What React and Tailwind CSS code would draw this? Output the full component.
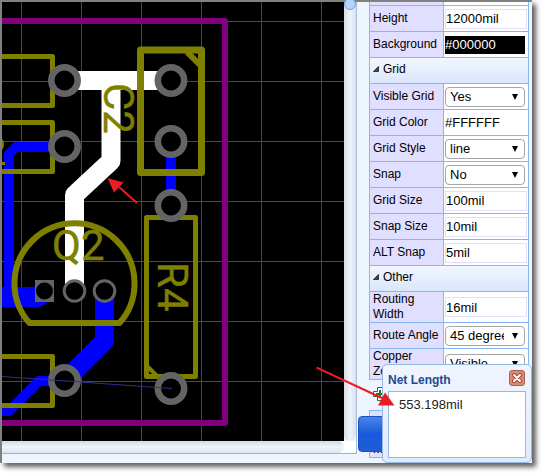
const pads = [
  [64.5, 80.5],
  [64.5, 146.5],
  [171, 80.5],
  [171, 141.5],
  [171, 205.5],
  [171, 388.5],
  [64.5, 380.5],
];
const gridX = [21.5, 81.5, 141.5, 201.5, 261.5, 321.5];
const gridY = [21.5, 81.5, 141.5, 201.5, 261.5, 321.5, 381.5];

function Board() {
  return (
    <svg
      className="block h-full w-full bg-black"
      viewBox="2 2 342 439"
      preserveAspectRatio="xMinYMin slice"
      role="img"
      aria-label="PCB layout"
    >
      <g stroke="#484848" strokeWidth="1">
        {gridX.map((x) => (
          <path key={x} d={`M${x} 0V900`} />
        ))}
        {gridY.map((y) => (
          <path key={y} d={`M0 ${y}H900`} />
        ))}
      </g>
      <g fill="none" stroke="#0000ff" strokeLinejoin="round">
        <path strokeWidth="10" d="M64 147H16L9 154V296" />
        <path strokeWidth="20" d="M0 297H38L44 291" />
        <path strokeWidth="10" d="M171 141V205" />
        <path strokeWidth="19" d="M104.5 291V341L64.5 381" />
        <path strokeWidth="10" d="M64 381H39L9 411H0" />
      </g>
      <g fill="none" stroke="#ffffff" strokeWidth="19" strokeLinejoin="round">
        <path d="M64 80.5H171" />
        <path d="M111 81V161L74.5 195V291" />
      </g>
      <path
        d="M0 21H225V423H0"
        fill="none"
        stroke="#800080"
        strokeWidth="6"
        strokeLinejoin="round"
      />
      <g fill="none" stroke="#808000" strokeWidth="5" strokeLinejoin="round">
        <path d="M0 56.5H52.5V105.5H0" />
        <path d="M0 122.5H52.5V171.5H0" />
        <path d="M0 356.5H52.5V405.5H0" />
        <path d="M146.5 217.5H195.5V376.5H146.5Z" />
        <path strokeWidth="4" d="M147 366L158 377" />
        <path strokeWidth="7" d="M140.5 50H201.5V172.5H140.5Z" />
        <path strokeWidth="6" d="M187 52L200 65" />
        <path strokeWidth="6" d="M29.5 323A60 60 0 1 1 119.5 323Z" />
        <path strokeWidth="3" d="M1 140Q4 144 1 149M2 163.5H5" />
      </g>
      <g
        fill="#808000"
        stroke="#808000"
        strokeWidth="0.4"
        fontFamily="Roboto, sans-serif"
        fontSize="42"
      >
        <text transform="translate(104 83) rotate(90)">C2</text>
        <text x="52" y="260">Q2</text>
        <text transform="translate(158 262) rotate(90)">R4</text>
      </g>
      <g fill="#000000" stroke="#646464" strokeWidth="6.5">
        {pads.map(([x, y]) => (
          <circle key={`${x}-${y}`} cx={x} cy={y} r="13.2" />
        ))}
      </g>
      <path d="M35 280H54V302H35Z" fill="#646464" />
      <circle cx="44.5" cy="291" r="8.5" fill="#000000" />
      <g fill="#000000" stroke="#646464" strokeWidth="3">
        <circle cx="74.5" cy="291" r="10.3" />
        <circle cx="104.5" cy="291" r="10.3" />
      </g>
      <path d="M2 376.5L172 388.5" stroke="#303088" strokeWidth="1" />
      <path d="M119 187L137 203" stroke="#ed1c24" strokeWidth="2" />
      <path d="M107.5 178L123.5 182.5L114 192.5Z" fill="#ed1c24" />
    </svg>
  );
}

const labelCell =
  "w-[74px] border-r border-b border-[#84b8f4] bg-[#e0dfff] py-0 pr-0 pl-[3px] text-left text-xs leading-[15px] font-normal";
const valueCell = "border-r border-b border-[#84b8f4] bg-white p-0 pl-px";

function Field({ id, label, value, type = "text" }) {
  let control;
  if (type === "select") {
    control = (
      <div className="relative w-20">
        <select
          id={id}
          defaultValue={value}
          className="block h-5 w-full appearance-none rounded-sm border border-[#a6a6a6] bg-white pr-5 pl-1 text-[13px] leading-4"
        >
          <option>{value}</option>
        </select>
        <svg
          className="pointer-events-none absolute top-[7px] right-[7px] h-[6px] w-[6px]"
          viewBox="0 0 6 6"
          aria-hidden="true"
        >
          <path d="M0 0H6L3 6Z" />
        </svg>
      </div>
    );
  } else if (type === "color") {
    control = (
      <input
        id={id}
        defaultValue={value}
        className={
          value === "#000000"
            ? "block h-[18px] w-20 bg-black text-[13px] text-white"
            : "block h-[18px] w-20 bg-white text-[13px] text-black"
        }
      />
    );
  } else {
    control = (
      <input
        id={id}
        defaultValue={value}
        className="block h-5 w-[82px] border border-[#e0dfff] bg-white text-[13px]"
      />
    );
  }
  return (
    <tr className="h-[26px]">
      <th scope="row" className={labelCell}>
        <label htmlFor={id}>{label}</label>
      </th>
      <td className={valueCell}>{control}</td>
    </tr>
  );
}

function Group({ title }) {
  return (
    <tr className="h-[26px]">
      <th
        colSpan={2}
        className="border-r border-b border-[#84b8f4] bg-linear-to-b from-[#f2f7ff] to-[#d9e6fb] p-0 pb-1 pl-[3px] text-left text-xs font-normal"
      >
        <span className="flex items-center gap-1">
          <svg className="h-[6px] w-[6px]" viewBox="0 0 7 7" aria-hidden="true">
            <path d="M6.5 0.5V6.5H0.5Z" fill="#444" stroke="#222" />
          </svg>
          {title}
        </span>
      </th>
    </tr>
  );
}

function Properties() {
  return (
    <aside className="relative w-[175px] shrink-0 overflow-hidden bg-[#eff5fe] pr-[3px] pl-3">
      <table className="w-full table-fixed border-separate border-spacing-0 border-l border-[#84b8f4]">
        <tbody>
          <tr className="h-1">
            <th className={labelCell}></th>
            <td className={valueCell}></td>
          </tr>
          <Field id="height" label="Height" value="12000mil" />
          <Field id="background" label="Background" value="#000000" type="color" />
          <Group title="Grid" />
          <Field id="visible" label="Visible Grid" value="Yes" type="select" />
          <Field id="color" label="Grid Color" value="#FFFFFF" type="color" />
          <Field id="style" label="Grid Style" value="line" type="select" />
          <Field id="snap" label="Snap" value="No" type="select" />
          <Field id="size" label="Grid Size" value="100mil" />
          <Field id="snapsize" label="Snap Size" value="10mil" />
          <Field id="altsnap" label="ALT Snap" value="5mil" />
          <Group title="Other" />
          <Field id="routing" label="Routing Width" value="16mil" />
          <Field id="angle" label="Route Angle" value="45 degree" type="select" />
          <Field id="copper" label="Copper Zone" value="Visible" type="select" />
        </tbody>
      </table>
      <svg className="mt-[6px] ml-[3px] h-4 w-4" viewBox="0 0 16 16" aria-hidden="true">
        <path
          d="M5.5 1.5H10.5V5.5H14.5V10.5H10.5V14.5H5.5V10.5H1.5V5.5H5.5Z"
          fill="#fff"
          stroke="#1c7a28"
          strokeLinejoin="round"
        />
        <path d="M7 4H9V7H12V9H9V12H7V9H4V7H7Z" fill="#1c7a28" />
      </svg>
      <div className="mt-2 flex h-12 border border-[#84b8f4] bg-white text-xs leading-[15px]">
        <span className="flex w-[74px] items-end border-r border-[#84b8f4] bg-[#e0dfff] pl-[3px]">
          Mouse
        </span>
      </div>
      <button
        type="button"
        aria-label="Apply"
        className="absolute top-[414px] left-px h-9 w-20 rounded-sm border border-[#1a50c4] bg-linear-to-b from-[#4a86e8] via-[#1a58dc] to-[#1f5cd6]"
      ></button>
    </aside>
  );
}

function NetLength() {
  return (
    <section
      aria-label="Net Length"
      className="absolute right-0 bottom-0 flex h-[99px] w-[150px] flex-col rounded-[5px] border border-[#95b8e7] bg-linear-to-b from-[#f0f5ff] to-[#e0ebfc] p-[5px] pb-1"
    >
      <header className="flex h-[21px] items-start justify-between">
        <h2 className="text-xs leading-5 font-bold text-[#1f4a90]">Net Length</h2>
        <button
          type="button"
          aria-label="Close"
          className="mr-px flex size-4 items-center justify-center rounded-[3px] border border-[#b06050] bg-[#db8a72]"
        >
          <svg className="size-[10px]" viewBox="0 0 10 10" aria-hidden="true">
            <path
              d="M2 2L8 8M8 2L2 8"
              stroke="#a04a38"
              strokeWidth="4"
              strokeLinecap="round"
            />
            <path d="M2 2L8 8M8 2L2 8" stroke="#fff" strokeWidth="2" strokeLinecap="round" />
          </svg>
        </button>
      </header>
      <div className="flex-1 border border-[#95b8e7] bg-white pt-[5px] pl-[10px] text-[13px] leading-4 text-[#222222]">
        553.198mil
      </div>
    </section>
  );
}

export default function App() {
  return (
    <div className="h-screen w-full overflow-hidden bg-white pr-[11px] pb-[11px] font-['Liberation_Sans',Arial,sans-serif] text-black">
      <main className="relative flex h-full border-t-2 border-l-2 border-[#808080] bg-[#eff5fe] shadow-[4px_4px_5px_#606060]">
        <div className="flex min-w-0 flex-1 flex-col">
          <div className="flex min-h-0 flex-1">
            <div className="min-h-0 min-w-0 flex-1 overflow-hidden">
              <Board />
            </div>
            <div className="w-3 shrink-0 rounded-b-md bg-linear-to-r from-[#d8dce4] via-[#eff5fe] to-[#d8e0ea]">
              <div className="-mt-1 h-3 rounded-full border border-[#70a0dc] bg-[#b4d4fa]"></div>
            </div>
            <div className="w-px bg-[#a9bbdc]"></div>
          </div>
          <div className="flex h-3 border-r border-[#a9bbdc] bg-white">
            <div className="mr-3 flex-1 rounded-r-md bg-linear-to-b from-[#d4d8e2] via-[#eff5fe] to-[#dce4ee]"></div>
          </div>
          <div className="h-[10px] border-t border-[#a0b0d0]"></div>
        </div>
        <Properties />
        <NetLength />
        <svg
          className="pointer-events-none absolute right-[136px] bottom-[56px] h-10 w-20"
          viewBox="0 0 80 40"
          aria-hidden="true"
        >
          <path d="M0.5 0.5L68 32" stroke="#ed1c24" strokeWidth="2" />
          <path d="M78.5 38.5L69 25.5L62 38.5Z" fill="#ed1c24" />
        </svg>
      </main>
    </div>
  );
}
